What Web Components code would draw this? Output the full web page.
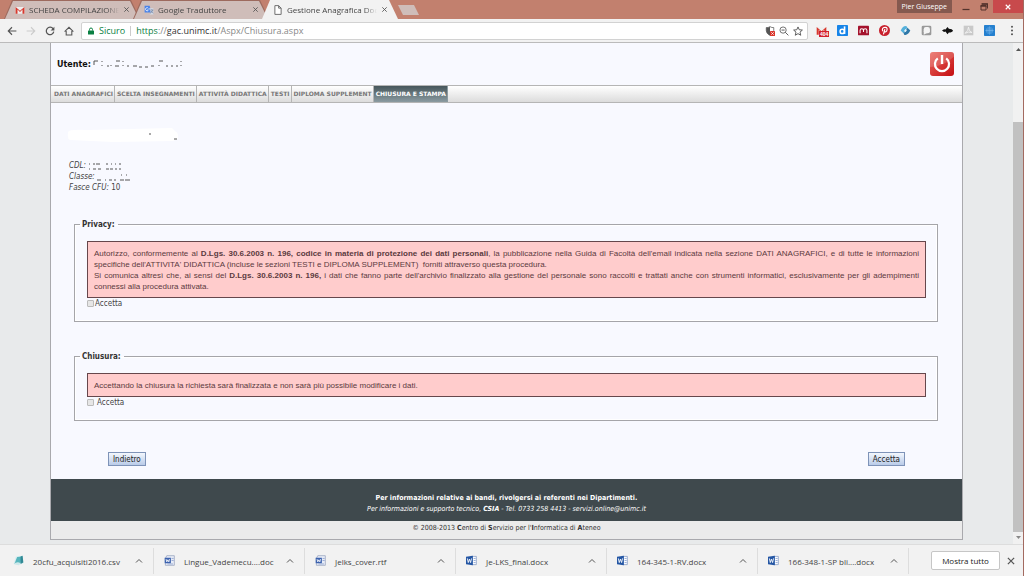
<!DOCTYPE html>
<html lang="it">
<head>
<meta charset="utf-8">
<title>Gestione Anagrafica Docenti</title>
<style>
html,body{margin:0;height:100%}
body{font-family:"Open Sans","Noto Sans",sans-serif;font-size:8px;line-height:11px;color:#444}
</style>
</head>
<body>
<app-window></app-window>
<script>
const define=(name,html,setup,attrs=[])=>{
  const t=document.createElement('template');t.innerHTML=html;
  customElements.define(name,class extends HTMLElement{
    static observedAttributes=attrs;
    constructor(){super();this.attachShadow({mode:'open'}).append(t.content.cloneNode(true));}
    connectedCallback(){if(setup)setup(this,this.shadowRoot);}
    attributeChangedCallback(){if(setup)setup(this,this.shadowRoot);}
  });
};

const icons={
 gmail:'<path d="M1 3h14v11H1z" fill="#eee"/><path d="M1 14V3l7 6 7-6v11h-3V7l-4 4-4-4v7z" fill="#d8382d"/>',
 translate:'<path d="M1 1h8l3 11H1z" fill="#4b83e8"/><path d="M8 5h7v10H9l2-3z" fill="#d5dbe6"/><path d="M7 5.500A2.500 2.500 0 1 0 7 8H5" fill="none" stroke="#fff" stroke-width="1.200"/><path d="M10 8h5M12.500 7v1M14 8q-1 4-4 5M11 9q1 3 4 4" stroke="#6c7f9e" fill="none"/>',
 page:'<path d="M3 1h6l4 4v10H3zM9 1v4h4" fill="#fff" stroke="#666" stroke-width="1.500"/>',
 back:'<path d="M15 8H2M8 2L2 8l6 6" fill="none" stroke="#555" stroke-width="1.800"/>',
 forward:'<path d="M1 8h13M8 2l6 6-6 6" fill="none" stroke="#ccc" stroke-width="1.800"/>',
 reload:'<path d="M13 4.500A6 6 0 1 0 14 9" fill="none" stroke="#555" stroke-width="2"/><path d="M15 1v6H9z" fill="#555"/>',
 home:'<path d="M1 9l7-7 7 7M3.500 8v6.500h9V8" fill="none" stroke="#555" stroke-width="1.700"/>',
 lock:'<rect x="2" y="7" width="12" height="8" rx="1" fill="#0b8043"/><path d="M5 7V5a3 3 0 0 1 6 0v2" fill="none" stroke="#0b8043" stroke-width="2"/>',
 shield:'<path d="M8 1q3 2 6 1.500V7q0 5-6 8-6-3-6-8V2.500Q5 3 8 1z" fill="#fff" stroke="#555" stroke-width="1.200"/><path d="M8 1v14Q2 12 2 7V2.500Q5 3 8 1z" fill="#555"/><rect x="8" y="8" width="8" height="8" rx="1" fill="#d9362b"/><path d="M10 10l4 4m0-4l-4 4" stroke="#fff" stroke-width="1.200"/>',
 zoomout:'<circle cx="6.500" cy="6.500" r="5" fill="none" stroke="#555" stroke-width="1.300"/><path d="M10 10l5 5M4 6.500h5" stroke="#555" stroke-width="1.500"/>',
 star:'<path d="M8 1.500l2 4.500 5 .5-3.800 3.300 1.200 5L8 12.200l-4.400 2.600 1.200-5L1 6.500 6 6z" fill="none" stroke="#555" stroke-width="1.500"/>',
 diigo:'<rect width="16" height="16" rx="1" fill="#1684e8"/><path d="M11 2v11" stroke="#fff" stroke-width="2.400"/><circle cx="7.600" cy="9.400" r="3.100" fill="none" stroke="#fff" stroke-width="2.200"/>',
 mendeley:'<rect y="1" width="16" height="14" rx="1" fill="#a4122c"/><path d="M3 12V8q0-2.500 2.500-2.500T8 8v2-2q0-2.500 2.500-2.500T13 8v4" fill="none" stroke="#fff" stroke-width="1.500"/>',
 pinterest:'<circle cx="8" cy="8" r="8" fill="#c8202d"/><path d="M5.500 9Q3.500 4 8.500 3.500T11 9q-2 2.200-3.500 0M8.500 6L6.500 13.500" fill="none" stroke="#fff" stroke-width="1.700"/>',
 swirl:'<path d="M1 8q4-8 9-6l1 3q-4 0-4 4l-2 3z" fill="#55b1dc"/><path d="M15 8q-4 8-9 6l-1-3q4 0 4-4l2-3z" fill="#2e78a8"/><path d="M6 8l2-2 2 2-2 2z" fill="#e8f4fa"/>',
 cam:'<rect x="1" y="1" width="14" height="14" rx="2" fill="#999"/><rect x="4" y="3" width="9" height="9" rx="3" fill="#f4f4f4"/><path d="M4 8v6l6-3z" fill="#f4f4f4"/>',
 fish:'<path d="M0 8l3-2 2 .500L8 3l2 2.500q5 0 6 2.500-1 3-6 3l-2 2.500-3-4L3 10z" fill="#111"/>',
 pdf:'<rect x="1" y="1" width="14" height="14" fill="#c9c9c9"/><path d="M3 12Q8 9 8 3q0 6 5 8-5-2-10 1z" fill="none" stroke="#f3f3f3" stroke-width="1.300"/>',
 globe:'<rect width="16" height="16" rx="1" fill="#2580cf"/><path d="M2 8h12M4 5v6M6 3v10M8 2v12M10 3v10M12 5v6" stroke="#83bdf0" stroke-width=".8"/>',
 menu:'<circle cx="8" cy="2.500" r="1.500" fill="#555"/><circle cx="8" cy="8" r="1.500" fill="#555"/><circle cx="8" cy="13.500" r="1.500" fill="#555"/>',
 close:'<path d="M3 3l10 10M13 3L3 13" stroke="#555" stroke-width="2"/>',
 caret:'<path d="M2 11l6-6 6 6" fill="none" stroke="#555" stroke-width="2"/>',
 csv:'<path d="M4 2l10-1 1 11-7 3-7-2z" fill="#d8eef0"/><path d="M6 3l7-1-2 10-9 1z" fill="#57b5bd"/><path d="M11 2l3-1 1 10-4 2z" fill="#318894"/><path d="M1 13q5-4 10-1l-3 3z" fill="#cfe8ea"/>',
 doc:'<path d="M4 1h11v14H2V5z" fill="#e8edf7" stroke="#8d9bb8"/><rect x="1" y="4" width="9" height="8" fill="#3c62ae"/><path d="M3 6l1 4 1.500-3L7 10l1-4" fill="none" stroke="#fff" stroke-width="1.200"/><path d="M11 5h3M11 8h3M5 13h8" stroke="#7c92c4"/>',
 docx:'<path d="M7 2h8v12H7z" fill="#fff" stroke="#7890bd"/><path d="M0 2.500L10 1v14L0 13.500z" fill="#2456a4"/><path d="M2 5l1.300 6L5 6l1.700 5L8 5" fill="none" stroke="#fff" stroke-width="1.300"/><path d="M11 5h3M11 8h3M11 11h3" stroke="#6d8cc6"/>',
 min:'<path d="M1 13h14" stroke="#54332c" stroke-width="2.500"/>',
 restore:'<path d="M4 2h11v9M2 5h10v9H2z" fill="none" stroke="#54332c" stroke-width="2"/><path d="M1 6h12M3 2h13" stroke="#54332c" stroke-width="3"/>',
 winclose:'<path d="M2 2l12 12M14 2L2 14" stroke="#fff" stroke-width="3"/>',
 power:'<defs><linearGradient id="g" x2="1" y2="1"><stop stop-color="#e9685f"/><stop offset="1" stop-color="#c40d12"/></linearGradient></defs><rect width="16" height="16" rx="2" fill="url(#g)"/><path d="M0 10Q9 10 16 3V2a2 2 0 0 0-2-2H2a2 2 0 0 0-2 2z" fill="#fff" opacity=".16"/><path d="M5.200 4.200a4.700 4.700 0 1 0 5.600 0" fill="none" stroke="#fff" stroke-width="1.500"/><path d="M8 2v6" stroke="#fff" stroke-width="1.600"/>'
};
define('ui-icon','<style>:host{display:block;flex:none;width:10px;height:10px}svg{display:block;width:100%;height:100%}</style><svg viewBox="0 0 16 16" aria-hidden="true"></svg>',
 (h,r)=>{r.querySelector('svg').innerHTML=icons[h.getAttribute('name')]||'';},['name']);

define('browser-tab',`<style>
:host{display:block;width:136px;height:19px;margin-right:-7px;background:#9d6a5e;clip-path:polygon(8px 0,127px 0,100% 100%,0 100%);--fill:#cfbdb9}
:host([active]){--fill:#f2f2f2;background:#f2f2f2;z-index:1;position:relative}
div{height:19px;box-sizing:border-box;padding:0 10px 0 11px;display:flex;align-items:center;gap:4px;background:var(--fill);clip-path:polygon(9px 1px,126px 1px,135px 100%,1px 100%)}
span{flex:1;overflow:hidden;white-space:nowrap;color:#444;mask-image:linear-gradient(90deg,#000 86%,transparent)}
button{border:0;padding:0;background:none}ui-icon.x{width:7px;height:7px}
</style><div><ui-icon></ui-icon><span><slot></slot></span><button aria-label="Chiudi scheda"><ui-icon class="x" name="close"></ui-icon></button></div>`,
 (h,r)=>r.querySelector('ui-icon').setAttribute('name',h.getAttribute('icon')));

define('tab-strip',`<style>
:host{display:flex;height:19px;background:#c2806e;padding-left:4px;align-items:flex-start}
.new{width:21px;height:10px;margin:5px 0 0 7px;padding:0;border:0;background:#cfbdb9;clip-path:polygon(0 0,16px 0,100% 100%,5px 100%)}
.win{margin-left:auto;display:flex;align-items:flex-start}
.user{height:13px;border:0;padding:0 5px;background:#85594f;color:#fff;font:7px/12px "Open Sans","Noto Sans",sans-serif}
.w{width:18px;height:13px;border:0;padding:2px 5px;background:none;display:grid;place-items:center}
.w ui-icon{width:8px;height:8px}.c{width:30px;background:#c84a4c}.c ui-icon{width:6px;height:6px}.first{margin-left:5px}
</style>
<browser-tab icon="gmail">SCHEDA COMPILAZIONE</browser-tab><browser-tab icon="translate">Google Traduttore</browser-tab><browser-tab icon="page" active>Gestione Anagrafica Docenti</browser-tab>
<button class="new" aria-label="Nuova scheda"></button>
<div class="win"><button class="user">Pier Giuseppe</button><button class="w first" aria-label="Riduci"><ui-icon name="min"></ui-icon></button><button class="w" aria-label="Ripristina"><ui-icon name="restore"></ui-icon></button><button class="w c" aria-label="Chiudi"><ui-icon name="winclose"></ui-icon></button></div>`);

define('tool-bar',`<style>
:host{display:flex;height:24px;box-sizing:border-box;background:#f2f2f2;border-bottom:1px solid #bbb;align-items:center;padding:0 5px 0 7px;gap:9px}
button{border:0;padding:0;background:none;position:relative}
.box{flex:1;display:flex;align-items:center;height:18px;box-sizing:border-box;background:#fff;border:1px solid #d2d2d2;border-radius:2px;padding:0 4px 0 5px;gap:4px;margin:0 -1px 0 -2px}
.box ui-icon.l{width:8px;height:8px}
.s{color:#0b8043;font-size:9px}.d{width:1px;height:10px;background:#ccc;margin:0 1px}
.u{flex:1;font-size:9px;color:#888}.u b{font-weight:400;color:#333}.u i{font-style:normal;color:#0b8043}
.ext{display:flex;gap:10px;align-items:center}
.ext ui-icon{width:11px;height:11px}
.n{position:absolute;left:3px;top:6px;background:#d3202c;color:#fff;font-size:5px;line-height:6px;padding:0 1px;font-weight:700}
.m{margin-left:1px}.m ui-icon{width:12px}
</style>
<button aria-label="Indietro"><ui-icon name="back"></ui-icon></button><button aria-label="Avanti"><ui-icon name="forward"></ui-icon></button><button aria-label="Ricarica"><ui-icon name="reload"></ui-icon></button><button aria-label="Pagina iniziale"><ui-icon name="home"></ui-icon></button>
<div class="box"><ui-icon class="l" name="lock"></ui-icon><span class="s">Sicuro</span><span class="d"></span><span class="u"><i>https</i>://<b>gac.unimc.it</b>/Aspx/Chiusura.aspx</span><ui-icon name="shield"></ui-icon><ui-icon name="zoomout"></ui-icon><ui-icon name="star"></ui-icon></div>
<div class="ext"><button aria-label="Posta"><ui-icon name="gmail"></ui-icon><span class="n">404</span></button><ui-icon name="diigo"></ui-icon><ui-icon name="mendeley"></ui-icon><ui-icon name="pinterest"></ui-icon><ui-icon name="swirl"></ui-icon><ui-icon name="cam"></ui-icon><ui-icon name="fish"></ui-icon><ui-icon name="pdf"></ui-icon><ui-icon name="globe"></ui-icon><button class="m" aria-label="Menu"><ui-icon name="menu"></ui-icon></button></div>`);

define('site-nav',`<style>
:host{display:block}nav{display:flex;height:18px;box-sizing:border-box;border:solid #b5b5b5;border-width:1px 0;padding-left:1px;background:linear-gradient(#fff,#dcdcdc)}
a{display:block;padding:0 1px 0 2px;border-right:1px solid #b5b5b5;font:bold 6px/16px "DejaVu Sans",sans-serif;color:#777;text-decoration:none;white-space:nowrap}
a[aria-current]{background:linear-gradient(#46565b,#8b9ba1);color:#fff;border-color:#8b9ba1}
</style><nav><a href="#">DATI ANAGRAFICI</a><a href="#">SCELTA INSEGNAMENTI</a><a href="#">ATTIVITÀ DIDATTICA</a><a href="#">TESTI</a><a href="#">DIPLOMA SUPPLEMENT</a><a href="#" aria-current="page">CHIUSURA E STAMPA</a></nav>`);

define('consent-panel',`<style>
:host{display:block}
fieldset{margin:0;border:1px solid #a5a5a9;box-shadow:inset 0 0 0 1px #fff;padding:11px 11px 12px 12px;min-width:0}
legend{font:bold 8px/11px "DejaVu Sans Condensed","DejaVu Sans",sans-serif;color:#333;padding:0 3px 0 2px;margin-left:-7px}
.note{border:1px solid #66474c;background:#fcc;padding:6px 6px 5px;text-align:justify;color:#5b3a3e;font-family:"Liberation Sans",Arial,sans-serif}
label{display:flex;align-items:center;gap:var(--gap,1px);color:#444;height:11px}
input{appearance:none;margin:0;width:7px;height:7px;border:1px solid #bbb;border-radius:1px;background:#e6e6e6}
</style><fieldset><legend></legend><div class="note"><slot></slot></div><label><input type="checkbox">Accetta</label></fieldset>`,
 (h,r)=>{r.querySelector('legend').textContent=h.getAttribute('heading');});

define('redacted-mark',`<style>:host{display:inline-block;vertical-align:middle}svg{display:block}</style><svg height="8" aria-hidden="true"><path fill="none" stroke="#555" stroke-width="1"/></svg>`,
 (h,r)=>{r.querySelector('svg').setAttribute('width',h.getAttribute('length'));r.querySelector('path').setAttribute('d',h.getAttribute('strokes'));});

define('site-page',`<style>
:host{display:block;margin:0 50px;border:solid #a9a9ad;border-width:0 1px 1px;background:#f8f9ff;font-family:"DejaVu Sans Condensed","DejaVu Sans",sans-serif}
header{display:flex;justify-content:space-between;align-items:center;height:42px;padding:0 8px 0 6px;color:#111}
header b{font-family:"DejaVu Sans",sans-serif}
header button{border:0;padding:0;background:none}header ui-icon{width:24px;height:24px}
main{padding:24px 24px 0 23px}
.blank{display:block;width:112px;height:16px;margin-left:-7px}
.info{margin:17px 0 0 -5px}.info p{margin:0;height:11px}
.a{margin-top:26px}.b{margin-top:29px;--gap:3px}
.act{display:flex;justify-content:space-between;padding:31px 33px 13px 34px}
.act button{height:14px;padding:0 4px;border:1px solid #7e93b8;background:linear-gradient(#f3f7fd,#b9cbe8);font:inherit;font-size:8px;line-height:11px;color:#222}
footer{text-align:center}.dark{background:#3f494d;color:#fff;padding:14px 0 6px}.dark p{margin:0}.dark p:first-child{font-weight:700;font-size:7px}.dark p+p{font-size:7px;font-style:italic}
.copy{background:#ebebeb;color:#333;font-size:7px;line-height:14px;height:18px}
</style>
<header><div><b>Utente:</b> <redacted-mark length="92" strokes="M1 5V1h4M9 1v1M9 5v1M14 6h2M18 5v1M23 1h4M22 6h4M30 1v1M30 5v1M34 6h2M40 6h4M46 7h3M52 7h3M58 6h3M66 1h4M66 5v1M73 6h2M78 6h2M83 6h2M88 1v1M88 5v1"></redacted-mark></div><button aria-label="Esci"><ui-icon name="power"></ui-icon></button></header>
<site-nav></site-nav>
<main>
<svg class="blank" viewBox="0 0 112 16" aria-hidden="true"><path d="M1 5Q2 2 20 3L105 1l3 3q4 2 3 8l-5 2-60 1-43-2Q0 12 1 5z" fill="#fff"/><path d="M83 6v2M107 12h3" stroke="#555"/></svg>
<div class="info"><p><i>CDL:</i> <redacted-mark length="36" strokes="M1 2h1M5 2h2M8 2h4M18 2h2M23 2h1M27 2h1M31 2h2M1 7h1M5 7h3M10 7h3M18 7h3M22 7h3M27 7h2M31 7h2"></redacted-mark></p><p><i>Classe:</i> <redacted-mark length="36" strokes="M0 7h4M8 7h1M12 7h3M17 7h2M23 7h4M28 7h5M24 2h1M29 2h1"></redacted-mark></p><p><i>Fasce CFU:</i> 10</p></div>
<consent-panel class="a" heading="Privacy:">Autorizzo, conformemente al <b>D.Lgs. 30.6.2003 n. 196, codice in materia di protezione dei dati personali</b>, la pubblicazione nella Guida di Facoltà dell'email indicata nella sezione DATI ANAGRAFICI, e di tutte le informazioni specifiche dell'ATTIVITA' DIDATTICA (incluse le sezioni TESTI e DIPLOMA SUPPLEMENT)&nbsp; forniti attraverso questa procedura.<br>Si comunica altresì che, ai sensi del <b>D.Lgs. 30.6.2003 n. 196,</b> i dati che fanno parte dell'archivio finalizzato alla gestione del personale sono raccolti e trattati anche con strumenti informatici, esclusivamente per gli adempimenti connessi alla procedura attivata.</consent-panel>
<consent-panel class="b" heading="Chiusura:">Accettando la chiusura la richiesta sarà finalizzata e non sarà più possibile modificare i dati.</consent-panel>
<div class="act"><button>Indietro</button><button>Accetta</button></div>
</main>
<footer><div class="dark"><p>Per informazioni relative ai bandi, rivolgersi ai referenti nei Dipartimenti.</p><p>Per informazioni e supporto tecnico, <b>CSIA</b> - Tel. 0733 258 4413 - servizi.online@unimc.it</p></div><div class="copy">© 2008-2013 <b>C</b>entro di <b>S</b>ervizio per l'<b>I</b>nformatica di <b>A</b>teneo</div></footer>`);

define('scroll-rail',`<style>:host{display:flex;flex-direction:column;width:10px;flex:none;background:#f1f1f1;align-items:center}
svg{width:9px;height:12px;flex:none}.t{width:10px;flex:1;background:#c1c1c1;margin-top:67px}</style>
<svg viewBox="0 0 9 12"><path d="M2 8l2.500-3L7 8z" fill="#555"/></svg><div class="t"></div><svg viewBox="0 0 9 12"><path d="M2 4l2.500 3L7 4z" fill="#888"/></svg>`);

define('download-item',`<style>
:host{display:flex;flex:0 0 151px;box-sizing:border-box;border-right:1px solid #ddd;height:26px;align-items:center;padding:0 10px 0 10px}
span{flex:1;margin-left:9px;color:#444;white-space:nowrap;padding-top:2px}button{border:0;padding:0;background:none}ui-icon{width:11px;height:11px}.k{width:8px;height:8px}
</style><ui-icon></ui-icon><span><slot></slot></span><button aria-label="Opzioni"><ui-icon class="k" name="caret"></ui-icon></button>`,
 (h,r)=>r.querySelector('ui-icon').setAttribute('name',h.getAttribute('icon')));

define('download-bar',`<style>
:host{display:flex;align-items:center;height:32px;box-sizing:border-box;background:#f2f2f2;border-top:1px solid #ddd;padding:0 7px 0 3px;overflow:hidden}
.all{margin-left:auto;width:69px;height:19px;border:1px solid #c6c6c6;border-radius:2px;background:#fff;padding:0;font:8px/11px "Open Sans","Noto Sans",sans-serif;color:#222}
.x{border:0;padding:0;background:none;margin-left:6px}
</style>
<download-item icon="csv">20cfu_acquisiti2016.csv</download-item><download-item icon="doc">Lingue_Vademecu....doc</download-item><download-item icon="doc">Jelks_cover.rtf</download-item><download-item icon="docx">Je-LKS_final.docx</download-item><download-item icon="docx">164-345-1-RV.docx</download-item><download-item icon="docx">166-348-1-SP bli....docx</download-item>
<button class="all">Mostra tutto</button><button class="x" aria-label="Chiudi"><ui-icon name="close"></ui-icon></button>`);

define('app-window',`<style>
:host{display:flex;flex-direction:column;min-height:100vh;box-sizing:border-box;border-right:1px solid #a36a60}
.view{flex:1;display:flex;min-height:0}.doc{flex:1;background:#e8eaeb}
</style><tab-strip></tab-strip><tool-bar></tool-bar><div class="view"><div class="doc"><site-page></site-page></div><scroll-rail></scroll-rail></div><download-bar></download-bar>`);
</script>
</body>
</html>
